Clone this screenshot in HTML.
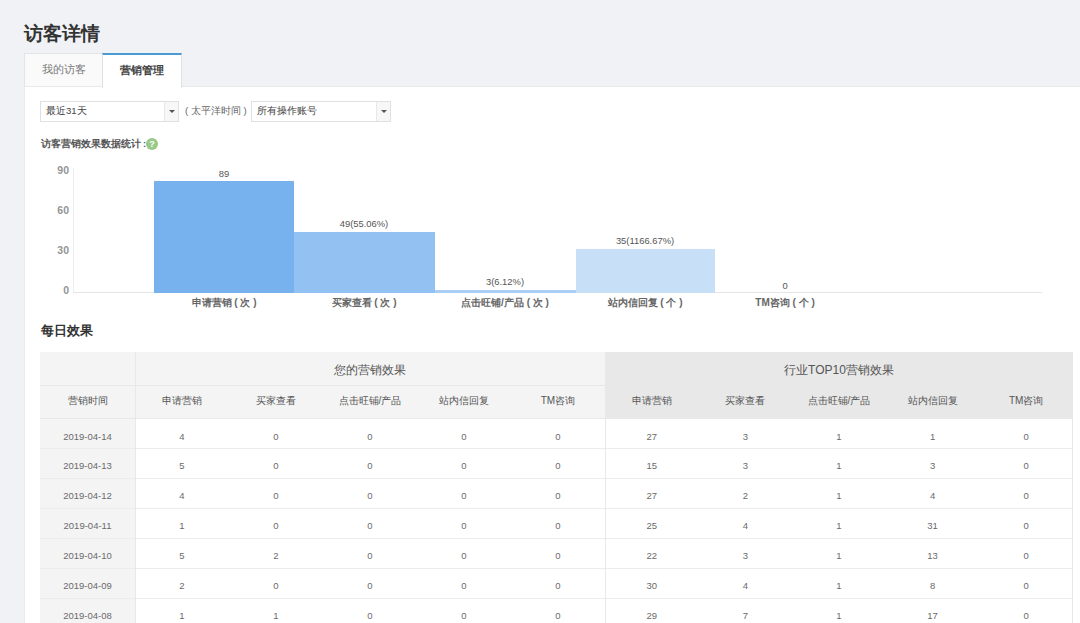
<!DOCTYPE html>
<html><head><meta charset="utf-8">
<style>
*{margin:0;padding:0;box-sizing:border-box}
html,body{width:1080px;height:623px;overflow:hidden;background:#f0f2f6;font-family:"Liberation Sans",sans-serif;color:#555}
.abs{position:absolute}
#title{left:24px;top:21px;font-size:19px;font-weight:bold;color:#333;line-height:26px;white-space:nowrap}
#tab1{left:24px;top:53px;width:79px;height:34px;background:#fafafa;border:1px solid #e4e4e4;border-bottom:none;font-size:11px;color:#777;text-align:center;line-height:30px}
#tab2{left:102px;top:53px;width:80px;height:35px;background:#fff;border:1px solid #e0e0e0;border-top:2px solid #4b9bd3;border-bottom:none;font-size:11px;font-weight:bold;color:#444;text-align:center;line-height:31px}
#panel{left:24px;top:86px;width:1056px;height:537px;background:#fff;border-left:1px solid #ebebeb;border-top:1px solid #e9e9e9}
.sel{height:21px;border:1px solid #e0e0e0;background:#fff;font-size:9.6px;color:#444;line-height:18px;padding-left:5px}
.sel .arr{position:absolute;right:0;top:0;width:14px;height:19px;background:#f7f7f7;border-left:1px solid #e8e8e8}
.sel .arr:after{content:"";position:absolute;left:4px;top:8px;border-left:3px solid transparent;border-right:3px solid transparent;border-top:3.5px solid #555}
#tz{left:185px;top:101px;font-size:9.6px;color:#666;line-height:19px;white-space:nowrap}
#stat{left:41px;top:137px;font-size:9.5px;font-weight:bold;color:#555;line-height:14px;white-space:nowrap}
#qm{left:146px;top:138px;width:12px;height:12px;border-radius:50%;background:#98c988;color:#fff;font-size:9px;font-weight:bold;text-align:center;line-height:12px}
.ylab{font-size:10.5px;font-weight:bold;color:#959595;text-align:right;width:30px;line-height:10px}
.bar{position:absolute}
.vlab{font-size:9.4px;color:#555;text-align:center;width:140px;line-height:10px;white-space:nowrap}
.clab{font-size:10px;color:#666;text-align:center;width:140px;line-height:14px;font-weight:bold;white-space:nowrap}
#h2{left:41px;top:322px;font-size:13px;font-weight:bold;color:#333;line-height:17px;white-space:nowrap}
table{position:absolute;left:40px;top:352px;border-collapse:collapse;table-layout:fixed;width:1033px}
td,th{font-size:9px;color:#555;text-align:center;font-weight:normal;white-space:nowrap;border-bottom:1px solid #ececec}
.hl{height:1px;background:#e8e8e8}
.hl2{height:1px;background:#ececec}
.vl{width:1px;background:#e8e8e8}
.gh{font-size:12px;color:#555;text-align:center;line-height:37px;white-space:nowrap}
.sh{font-size:10px;color:#555;text-align:center;line-height:32px;white-space:nowrap}
.td{font-size:9.5px;color:#6a6a6a;text-align:center;line-height:35px;height:29px;white-space:nowrap}
</style></head><body>
<div id="title" class="abs">访客详情</div>
<div id="tab1" class="abs">我的访客</div>
<div id="panel" class="abs"></div>
<div id="tab2" class="abs">营销管理</div>

<div class="abs sel" style="left:40px;top:101px;width:139px">最近31天<span class="arr"></span></div>
<div id="tz" class="abs">( 太平洋时间 )</div>
<div class="abs sel" style="left:251px;top:101px;width:140px">所有操作账号<span class="arr"></span></div>
<div id="stat" class="abs">访客营销效果数据统计<span style="margin-left:2px">:</span></div>
<div id="qm" class="abs">?</div>

<!-- chart -->
<div class="abs" style="left:73px;top:168px;width:1px;height:125px;background:#ededed"></div>
<div class="abs" style="left:73px;top:292px;width:969px;height:1px;background:#e6e6e6"></div>
<div class="abs ylab" style="left:39px;top:165px">90</div>
<div class="abs ylab" style="left:39px;top:205px">60</div>
<div class="abs ylab" style="left:39px;top:245px">30</div>
<div class="abs ylab" style="left:39px;top:285px">0</div>

<div class="bar" style="left:154px;top:181px;width:140px;height:112px;background:#77b1ee"></div>
<div class="bar" style="left:294px;top:232px;width:141px;height:61px;background:#93c1f1"></div>
<div class="bar" style="left:435px;top:290px;width:141px;height:3px;background:#aacef4"></div>
<div class="bar" style="left:576px;top:249px;width:139px;height:44px;background:#c8dff8"></div>

<div class="abs vlab" style="left:154px;top:169px">89</div>
<div class="abs vlab" style="left:294px;top:219px">49(55.06%)</div>
<div class="abs vlab" style="left:435px;top:277px">3(6.12%)</div>
<div class="abs vlab" style="left:575px;top:236px">35(1166.67%)</div>
<div class="abs vlab" style="left:715px;top:281px">0</div>

<div class="abs clab" style="left:154px;top:296px">申请营销 ( 次 )</div>
<div class="abs clab" style="left:294px;top:296px">买家查看 ( 次 )</div>
<div class="abs clab" style="left:435px;top:296px">点击旺铺/产品 ( 次 )</div>
<div class="abs clab" style="left:575px;top:296px">站内信回复 ( 个 )</div>
<div class="abs clab" style="left:715px;top:296px">TM咨询 ( 个 )</div>

<div id="h2" class="abs">每日效果</div>

<div id="tbl">
<div class="abs" style="left:40px;top:352px;width:565px;height:67px;background:#f4f4f4"></div>
<div class="abs" style="left:605px;top:352px;width:468px;height:67px;background:#e8e8e8"></div>
<div class="abs" style="left:40px;top:419px;width:95px;height:204px;background:#f4f4f4"></div>
<div class="abs hl" style="left:40px;top:385px;width:1033px"></div>
<div class="abs hl" style="left:40px;top:418px;width:1033px"></div>
<div class="abs hl2" style="left:40px;top:448px;width:1033px"></div>
<div class="abs hl2" style="left:40px;top:478px;width:1033px"></div>
<div class="abs hl2" style="left:40px;top:508px;width:1033px"></div>
<div class="abs hl2" style="left:40px;top:538px;width:1033px"></div>
<div class="abs hl2" style="left:40px;top:568px;width:1033px"></div>
<div class="abs hl2" style="left:40px;top:598px;width:1033px"></div>
<div class="abs vl" style="left:135px;top:352px;height:271px"></div>
<div class="abs vl" style="left:605px;top:352px;height:271px"></div>
<div class="abs vl" style="left:1072px;top:352px;height:271px"></div>
<div class="abs gh" style="left:135px;top:352px;width:470px">您的营销效果</div>
<div class="abs gh" style="left:605px;top:352px;width:468px">行业TOP10营销效果</div>
<div class="abs sh" style="left:40px;top:385px;width:95px">营销时间</div>
<div class="abs sh" style="left:135px;top:385px;width:94px">申请营销</div>
<div class="abs sh" style="left:229px;top:385px;width:94px">买家查看</div>
<div class="abs sh" style="left:323px;top:385px;width:94px">点击旺铺/产品</div>
<div class="abs sh" style="left:417px;top:385px;width:94px">站内信回复</div>
<div class="abs sh" style="left:511px;top:385px;width:94px">TM咨询</div>
<div class="abs sh" style="left:605px;top:385px;width:93.60000000000002px">申请营销</div>
<div class="abs sh" style="left:698.6px;top:385px;width:93.60000000000002px">买家查看</div>
<div class="abs sh" style="left:792.2px;top:385px;width:93.59999999999991px">点击旺铺/产品</div>
<div class="abs sh" style="left:885.8px;top:385px;width:93.60000000000002px">站内信回复</div>
<div class="abs sh" style="left:979.4px;top:385px;width:93.60000000000002px">TM咨询</div>
<div class="abs td" style="left:40px;top:419px;width:95px">2019-04-14</div>
<div class="abs td" style="left:135px;top:419px;width:94px">4</div>
<div class="abs td" style="left:229px;top:419px;width:94px">0</div>
<div class="abs td" style="left:323px;top:419px;width:94px">0</div>
<div class="abs td" style="left:417px;top:419px;width:94px">0</div>
<div class="abs td" style="left:511px;top:419px;width:94px">0</div>
<div class="abs td" style="left:605px;top:419px;width:93.60000000000002px">27</div>
<div class="abs td" style="left:698.6px;top:419px;width:93.60000000000002px">3</div>
<div class="abs td" style="left:792.2px;top:419px;width:93.59999999999991px">1</div>
<div class="abs td" style="left:885.8px;top:419px;width:93.60000000000002px">1</div>
<div class="abs td" style="left:979.4px;top:419px;width:93.60000000000002px">0</div>
<div class="abs td" style="left:40px;top:448px;width:95px">2019-04-13</div>
<div class="abs td" style="left:135px;top:448px;width:94px">5</div>
<div class="abs td" style="left:229px;top:448px;width:94px">0</div>
<div class="abs td" style="left:323px;top:448px;width:94px">0</div>
<div class="abs td" style="left:417px;top:448px;width:94px">0</div>
<div class="abs td" style="left:511px;top:448px;width:94px">0</div>
<div class="abs td" style="left:605px;top:448px;width:93.60000000000002px">15</div>
<div class="abs td" style="left:698.6px;top:448px;width:93.60000000000002px">3</div>
<div class="abs td" style="left:792.2px;top:448px;width:93.59999999999991px">1</div>
<div class="abs td" style="left:885.8px;top:448px;width:93.60000000000002px">3</div>
<div class="abs td" style="left:979.4px;top:448px;width:93.60000000000002px">0</div>
<div class="abs td" style="left:40px;top:478px;width:95px">2019-04-12</div>
<div class="abs td" style="left:135px;top:478px;width:94px">4</div>
<div class="abs td" style="left:229px;top:478px;width:94px">0</div>
<div class="abs td" style="left:323px;top:478px;width:94px">0</div>
<div class="abs td" style="left:417px;top:478px;width:94px">0</div>
<div class="abs td" style="left:511px;top:478px;width:94px">0</div>
<div class="abs td" style="left:605px;top:478px;width:93.60000000000002px">27</div>
<div class="abs td" style="left:698.6px;top:478px;width:93.60000000000002px">2</div>
<div class="abs td" style="left:792.2px;top:478px;width:93.59999999999991px">1</div>
<div class="abs td" style="left:885.8px;top:478px;width:93.60000000000002px">4</div>
<div class="abs td" style="left:979.4px;top:478px;width:93.60000000000002px">0</div>
<div class="abs td" style="left:40px;top:508px;width:95px">2019-04-11</div>
<div class="abs td" style="left:135px;top:508px;width:94px">1</div>
<div class="abs td" style="left:229px;top:508px;width:94px">0</div>
<div class="abs td" style="left:323px;top:508px;width:94px">0</div>
<div class="abs td" style="left:417px;top:508px;width:94px">0</div>
<div class="abs td" style="left:511px;top:508px;width:94px">0</div>
<div class="abs td" style="left:605px;top:508px;width:93.60000000000002px">25</div>
<div class="abs td" style="left:698.6px;top:508px;width:93.60000000000002px">4</div>
<div class="abs td" style="left:792.2px;top:508px;width:93.59999999999991px">1</div>
<div class="abs td" style="left:885.8px;top:508px;width:93.60000000000002px">31</div>
<div class="abs td" style="left:979.4px;top:508px;width:93.60000000000002px">0</div>
<div class="abs td" style="left:40px;top:538px;width:95px">2019-04-10</div>
<div class="abs td" style="left:135px;top:538px;width:94px">5</div>
<div class="abs td" style="left:229px;top:538px;width:94px">2</div>
<div class="abs td" style="left:323px;top:538px;width:94px">0</div>
<div class="abs td" style="left:417px;top:538px;width:94px">0</div>
<div class="abs td" style="left:511px;top:538px;width:94px">0</div>
<div class="abs td" style="left:605px;top:538px;width:93.60000000000002px">22</div>
<div class="abs td" style="left:698.6px;top:538px;width:93.60000000000002px">3</div>
<div class="abs td" style="left:792.2px;top:538px;width:93.59999999999991px">1</div>
<div class="abs td" style="left:885.8px;top:538px;width:93.60000000000002px">13</div>
<div class="abs td" style="left:979.4px;top:538px;width:93.60000000000002px">0</div>
<div class="abs td" style="left:40px;top:568px;width:95px">2019-04-09</div>
<div class="abs td" style="left:135px;top:568px;width:94px">2</div>
<div class="abs td" style="left:229px;top:568px;width:94px">0</div>
<div class="abs td" style="left:323px;top:568px;width:94px">0</div>
<div class="abs td" style="left:417px;top:568px;width:94px">0</div>
<div class="abs td" style="left:511px;top:568px;width:94px">0</div>
<div class="abs td" style="left:605px;top:568px;width:93.60000000000002px">30</div>
<div class="abs td" style="left:698.6px;top:568px;width:93.60000000000002px">4</div>
<div class="abs td" style="left:792.2px;top:568px;width:93.59999999999991px">1</div>
<div class="abs td" style="left:885.8px;top:568px;width:93.60000000000002px">8</div>
<div class="abs td" style="left:979.4px;top:568px;width:93.60000000000002px">0</div>
<div class="abs td" style="left:40px;top:598px;width:95px">2019-04-08</div>
<div class="abs td" style="left:135px;top:598px;width:94px">1</div>
<div class="abs td" style="left:229px;top:598px;width:94px">1</div>
<div class="abs td" style="left:323px;top:598px;width:94px">0</div>
<div class="abs td" style="left:417px;top:598px;width:94px">0</div>
<div class="abs td" style="left:511px;top:598px;width:94px">0</div>
<div class="abs td" style="left:605px;top:598px;width:93.60000000000002px">29</div>
<div class="abs td" style="left:698.6px;top:598px;width:93.60000000000002px">7</div>
<div class="abs td" style="left:792.2px;top:598px;width:93.59999999999991px">1</div>
<div class="abs td" style="left:885.8px;top:598px;width:93.60000000000002px">17</div>
<div class="abs td" style="left:979.4px;top:598px;width:93.60000000000002px">0</div>
</div>
</body></html>
